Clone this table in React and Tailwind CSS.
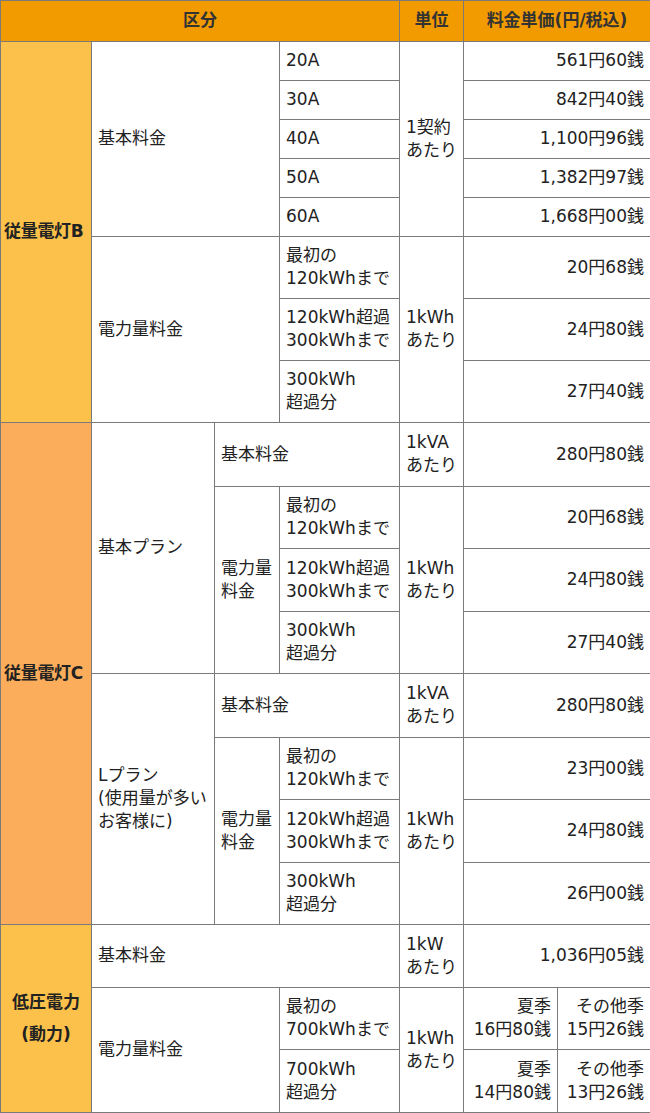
const cell = 'border border-[#7a7a7a] px-[6px] pt-[7px] pb-[8px] align-middle'
const lbl = `${cell} text-left`
const num = `${cell} text-right`

function Br({ a, b }) {
  return (
    <>
      {a}
      <br />
      {b}
    </>
  )
}

function Price({ children, span = 2 }) {
  return (
    <td colSpan={span} className={num}>
      {children}
    </td>
  )
}

export default function App() {
  return (
    <div
      className="w-[650px] bg-white text-[#222] text-[17px] leading-[23px]"
      style={{ fontFamily: '"DejaVu Sans", "Noto Sans CJK JP", sans-serif' }}
    >
      <table className="w-[650px] table-fixed border-collapse border border-[#7a7a7a]">
        <colgroup>
          <col className="w-[91px]" />
          <col className="w-[123px]" />
          <col className="w-[65px]" />
          <col className="w-[120px]" />
          <col className="w-[64px]" />
          <col className="w-[94px]" />
          <col className="w-[93px]" />
        </colgroup>
        <thead>
          <tr className="bg-[#f29b00] font-bold text-[#333]">
            <th colSpan={4} className="border border-[#7a7a7a] pt-[8px] pb-[9px] text-center">区分</th>
            <th className="border border-[#7a7a7a] pt-[8px] pb-[9px] text-center">単位</th>
            <th colSpan={2} className="border border-[#7a7a7a] pt-[8px] pb-[9px] text-center">料金単価(円/税込)</th>
          </tr>
        </thead>
        <tbody>
          {/* 従量電灯B */}
          <tr>
            <th rowSpan={8} className={`${lbl} bg-[#fbc14b] font-bold !px-[3px] whitespace-nowrap tracking-[-0.3px]`}>従量電灯B</th>
            <td rowSpan={5} colSpan={2} className={lbl}>基本料金</td>
            <td className={lbl}>20A</td>
            <td rowSpan={5} className={lbl}><Br a="1契約" b="あたり" /></td>
            <Price>561円60銭</Price>
          </tr>
          <tr>
            <td className={lbl}>30A</td>
            <Price>842円40銭</Price>
          </tr>
          <tr>
            <td className={lbl}>40A</td>
            <Price>1,100円96銭</Price>
          </tr>
          <tr>
            <td className={lbl}>50A</td>
            <Price>1,382円97銭</Price>
          </tr>
          <tr>
            <td className={lbl}>60A</td>
            <Price>1,668円00銭</Price>
          </tr>
          <tr>
            <td rowSpan={3} colSpan={2} className={lbl}>電力量料金</td>
            <td className={lbl}><Br a="最初の" b="120kWhまで" /></td>
            <td rowSpan={3} className={lbl}><Br a="1kWh" b="あたり" /></td>
            <Price>20円68銭</Price>
          </tr>
          <tr>
            <td className={lbl}><Br a="120kWh超過" b="300kWhまで" /></td>
            <Price>24円80銭</Price>
          </tr>
          <tr>
            <td className={lbl}><Br a="300kWh" b="超過分" /></td>
            <Price>27円40銭</Price>
          </tr>

          {/* 従量電灯C */}
          <tr className="h-[64px]">
            <th rowSpan={8} className={`${lbl} bg-[#fbad5b] font-bold !px-[3px] whitespace-nowrap tracking-[-0.3px]`}>従量電灯C</th>
            <td rowSpan={4} className={lbl}>基本プラン</td>
            <td colSpan={2} className={lbl}>基本料金</td>
            <td className={lbl}><Br a="1kVA" b="あたり" /></td>
            <Price>280円80銭</Price>
          </tr>
          <tr className="h-[62px]">
            <td rowSpan={3} className={lbl}><Br a="電力量" b="料金" /></td>
            <td className={lbl}><Br a="最初の" b="120kWhまで" /></td>
            <td rowSpan={3} className={lbl}><Br a="1kWh" b="あたり" /></td>
            <Price>20円68銭</Price>
          </tr>
          <tr className="h-[63px]">
            <td className={lbl}><Br a="120kWh超過" b="300kWhまで" /></td>
            <Price>24円80銭</Price>
          </tr>
          <tr className="h-[62px]">
            <td className={lbl}><Br a="300kWh" b="超過分" /></td>
            <Price>27円40銭</Price>
          </tr>
          <tr className="h-[64px]">
            <td rowSpan={4} className={lbl}>
              Lプラン
              <br />
              (使用量が多い
              <br />
              お客様に)
            </td>
            <td colSpan={2} className={lbl}>基本料金</td>
            <td className={lbl}><Br a="1kVA" b="あたり" /></td>
            <Price>280円80銭</Price>
          </tr>
          <tr className="h-[62px]">
            <td rowSpan={3} className={lbl}><Br a="電力量" b="料金" /></td>
            <td className={lbl}><Br a="最初の" b="120kWhまで" /></td>
            <td rowSpan={3} className={lbl}><Br a="1kWh" b="あたり" /></td>
            <Price>23円00銭</Price>
          </tr>
          <tr className="h-[63px]">
            <td className={lbl}><Br a="120kWh超過" b="300kWhまで" /></td>
            <Price>24円80銭</Price>
          </tr>
          <tr className="h-[62px]">
            <td className={lbl}><Br a="300kWh" b="超過分" /></td>
            <Price>26円00銭</Price>
          </tr>

          {/* 低圧電力 */}
          <tr className="h-[63px]">
            <th rowSpan={3} className={`${cell} bg-[#fbc14b] font-bold text-center leading-[32px]`}>
              <Br a="低圧電力" b="(動力)" />
            </th>
            <td colSpan={3} className={lbl}>基本料金</td>
            <td className={lbl}><Br a="1kW" b="あたり" /></td>
            <Price>1,036円05銭</Price>
          </tr>
          <tr className="h-[62px]">
            <td rowSpan={2} colSpan={2} className={lbl}>電力量料金</td>
            <td className={lbl}><Br a="最初の" b="700kWhまで" /></td>
            <td rowSpan={2} className={lbl}><Br a="1kWh" b="あたり" /></td>
            <td className={num}><Br a="夏季" b="16円80銭" /></td>
            <td className={num}><Br a="その他季" b="15円26銭" /></td>
          </tr>
          <tr className="h-[63px]">
            <td className={lbl}><Br a="700kWh" b="超過分" /></td>
            <td className={num}><Br a="夏季" b="14円80銭" /></td>
            <td className={num}><Br a="その他季" b="13円26銭" /></td>
          </tr>
        </tbody>
      </table>
    </div>
  )
}
